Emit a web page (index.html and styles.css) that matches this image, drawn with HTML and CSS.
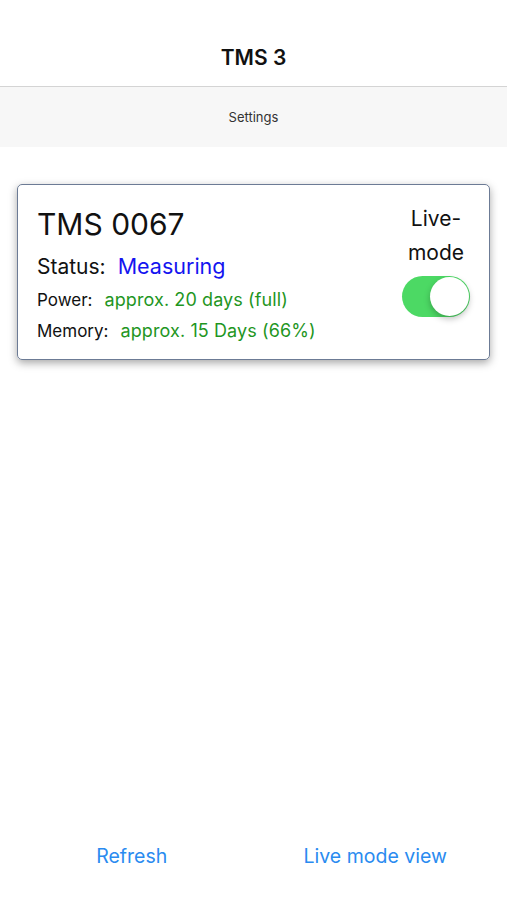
FILE: index.html
```html
<!DOCTYPE html>
<html lang="en">
<head>
  <meta charset="UTF-8">
  <meta name="viewport" content="width=device-width, initial-scale=1.0">
  <title>TMS 3</title>
  <link rel="stylesheet" href="styles.css">
</head>
<body>

  <div id="page">
    <div id="nav-bar">
      <h1>TMS 3</h1>
    </div>
    <div id="settings-bar">Settings</div>

    <div id="content">
      <div class="device-card">
        <div class="device-info">
          <div class="device-name">TMS 0067</div>
          <div class="status-row">Status:<span class="status-value">Measuring</span></div>
          <div class="info-row">Power:<span class="info-value">approx. 20 days (full)</span></div>
          <div class="info-row">Memory:<span class="info-value memory">approx. 15 Days (66%)</span></div>
        </div>
        <div class="live-mode">
          <div class="live-label">Live-<br>mode</div>
          <div class="toggle on"><div class="knob"></div></div>
        </div>
      </div>
    </div>

    <div id="toolbar">
      <a class="tool-button">Refresh</a>
      <a class="tool-button">Live mode view</a>
    </div>
  </div>

</body>
</html>
```

FILE: styles.css
```css
/* Basic page layout */
body {
  font-family: Inter, "Liberation Sans", Arial, sans-serif;
  background-color: #ffffff;
  margin: 0;
  padding: 0;
  color: #111;
}

#page {
  display: flex;
  flex-direction: column;
  height: 100vh;
}

#nav-bar {
  height: 86px;
  border-bottom: 1px solid #d4d4d4;
}

#nav-bar h1 {
  margin: 0;
  padding-top: 44px;
  font-size: 21px;
  line-height: 28px;
  font-weight: 600;
  text-align: center;
  color: #111;
}

#settings-bar {
  height: 60px;
  line-height: 60px;
  background-color: #f7f7f7;
  text-align: center;
  font-size: 13px;
  color: #333;
}

#content {
  flex: 1;
  padding: 37px 17px 0;
}

/* Device card */
.device-card {
  display: flex;
  justify-content: space-between;
  border: 1px solid #6c7b95;
  border-radius: 5px;
  box-shadow: 0 3px 8px rgba(0, 0, 0, 0.35);
  padding: 17px 19px 0 19px;
  box-sizing: border-box;
  height: 176px;
}

.device-info {
  padding-top: 4px;
}

.device-name {
  font-size: 30px;
  line-height: 36px;
}

.status-row {
  margin-top: 11px;
  font-size: 21px;
  line-height: 26px;
}

.status-value {
  margin-left: 12px;
  font-size: 21.5px;
  color: #1414f0;
}

.info-row {
  margin-top: 9px;
  font-size: 17px;
  line-height: 22px;
}

.info-value {
  margin-left: 12px;
  font-size: 18px;
  letter-spacing: 0.1px;
  color: #1f961f;
}

.live-mode {
  display: flex;
  flex-direction: column;
  align-items: center;
  width: 68px;
}

.live-label {
  font-size: 21px;
  line-height: 34px;
  text-align: center;
  white-space: nowrap;
}

.toggle {
  margin-top: 6px;
  width: 68px;
  height: 41px;
  border-radius: 21px;
  background-color: #4cd964;
  position: relative;
}

.toggle .knob {
  position: absolute;
  top: 1px;
  right: 1px;
  width: 39px;
  height: 39px;
  border-radius: 50%;
  background-color: #ffffff;
  box-shadow: 0 3px 6px rgba(0, 0, 0, 0.25);
}

/* Bottom toolbar */
#toolbar {
  display: flex;
  padding: 16px 10px 32px;
}

.tool-button {
  flex: 1;
  text-align: center;
  font-size: 19.5px;
  line-height: 24px;
  color: #2a8bf0;
  cursor: pointer;
}
```
